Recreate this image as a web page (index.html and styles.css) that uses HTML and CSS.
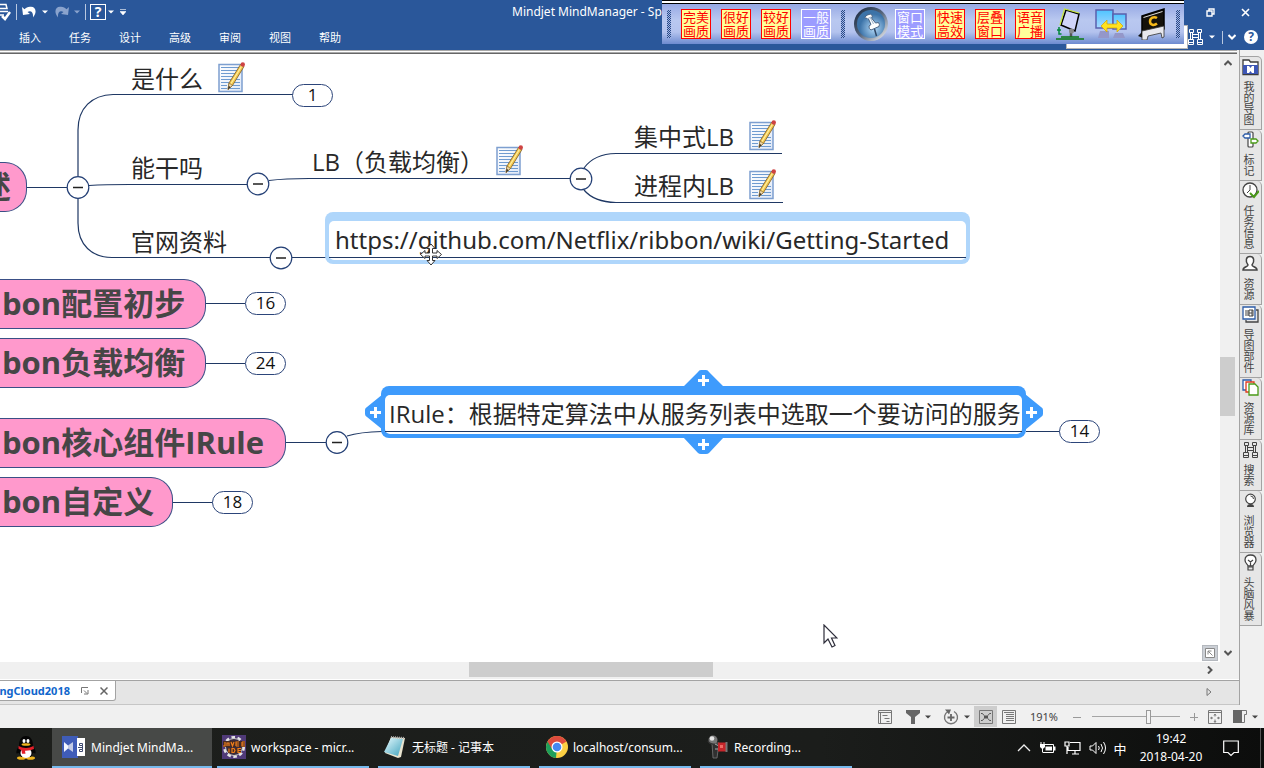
FILE: index.html
```html
<!DOCTYPE html>
<html lang="zh-CN">
<head>
<meta charset="utf-8">
<title>Mindjet MindManager</title>
<link rel="stylesheet" href="styles.css">
</head>
<body>
<svg class="defs" aria-hidden="true">
  <defs>
    <linearGradient id="paper" x1="0" y1="0" x2="1" y2="1"><stop offset="0" stop-color="#fff"/><stop offset="1" stop-color="#dfe8f7"/></linearGradient>
    <linearGradient id="pad" x1="0" y1="0" x2="1" y2="1"><stop offset="0" stop-color="#e8fbff"/><stop offset="1" stop-color="#3fa3bd"/></linearGradient>
    <linearGradient id="screen" x1="0" y1="0" x2="0" y2="1"><stop offset="0" stop-color="#4fc4ff"/><stop offset="1" stop-color="#a9d8ff"/></linearGradient>
    <linearGradient id="ring" x1="0" y1="0" x2="1" y2="1"><stop offset="0" stop-color="#15233a"/><stop offset=".5" stop-color="#55657c"/><stop offset="1" stop-color="#fff"/></linearGradient>
    <radialGradient id="ball" cx=".6" cy=".65"><stop offset="0" stop-color="#b5dcfb"/><stop offset="1" stop-color="#3c73a8"/></radialGradient>
    <symbol id="note" viewBox="0 0 28 32">
      <rect x="1" y="3.500" width="23" height="27" fill="url(#paper)" stroke="#7d9fd0" stroke-width="1.500"/>
      <path d="M3 6.500h18M3 9.500h17M3 12.500h15M3 15.500h13M3 18.500h11M3 21.500h8M3 24.500h6M3 27.500h6M17 18.500h5M16 21.500h6M14 24.500h8M12 27.500h10" stroke="#6f9bd0" stroke-width="1"/>
      <path d="M10 28.500l1-6.500L22.500 3.500l3.500 2L14.500 24.500z" fill="#f3c64c" stroke="#7b5a24" stroke-width=".8"/>
      <path d="M13 22.500L24 4.500" stroke="#fff0a0" stroke-width="1.200"/>
      <path d="M10 28.500l1-6.500 3.500 2.500z" fill="#f0d9a8" stroke="#7b5a24" stroke-width=".6"/>
      <path d="M10 28.500l.8-3.500 1.700 1z" fill="#222"/>
      <circle cx="24.800" cy="3.500" r="2.200" fill="#cf4343"/>
    </symbol>
    <symbol id="down" viewBox="0 0 6 4"><path d="M0 .5h6L3 3.500z" fill="currentColor"/></symbol>
    <symbol id="scopes" viewBox="0 0 17 16">
      <path d="M2.500.500h4v3h-4zM10.500.500h4v3h-4zM3.500 3.500v7M5.500 3.500v7M11.500 3.500v7M13.500 3.500v7M5.500 5.500h6M5.500 8.500h6M1.500 10.500h5v5h-5zM10.500 10.500h5v5h-5zM1.500 13.500h5M10.500 13.500h5" fill="none" stroke="currentColor" stroke-width="1"/>
    </symbol>
  </defs>
</svg>

<header class="ribbon">
  <div class="title-row">
    <div class="quick">
      <button type="button" aria-label="拼写检查"><svg width="11" height="18" viewBox="0 0 11 18"><path d="M0 1.500h6l1 4H0M0 8.500h8M0 12h4" fill="none" stroke="#fff" stroke-width="1.500"/><path d="M2 13l3 3 5-7" fill="none" stroke="#fff" stroke-width="2.500"/></svg></button>
      <i class="bar"></i>
      <button type="button" aria-label="撤销"><svg width="15" height="12" viewBox="0 0 15 12"><path d="M0 1l1 8 7-1-2.500-2c3-2 6-.5 5.500 5.500C16 5 13 0 8 .8 5.500 1 4 2 2.500 3.200z" fill="#fff"/></svg></button>
      <svg class="dd" width="6" height="4"><use href="#down"/></svg>
      <button type="button" class="redo" aria-label="重做"><svg width="15" height="12" viewBox="0 0 15 12"><path d="M15 1l-1 8-7-1 2.500-2c-3-2-6-.5-5.500 5.500C-1 5 2 0 7 .8c2.500.2 4 1.200 5.500 2.400z" fill="#8aa3cd"/></svg></button>
      <svg class="dd dim" width="6" height="4"><use href="#down"/></svg>
      <i class="bar"></i>
      <button type="button" class="ask">?</button>
      <svg class="dd" width="6" height="4"><use href="#down"/></svg>
      <button type="button" class="more" aria-label="自定义"><svg width="6" height="6" viewBox="0 0 6 6"><path d="M0 .5h6M0 2.500h6L3 6z" fill="#fff" stroke="#fff" stroke-width=".6"/></svg></button>
    </div>
    <h1 class="app-title">Mindjet MindManager - Sp</h1>
    <div class="window-buttons">
      <button type="button" aria-label="还原"><svg width="9" height="9" viewBox="0 0 9 9"><path d="M1 3h5v5H1zM3 3V1h5v5H6" fill="none" stroke="#fff" stroke-width="1.400"/></svg></button>
      <button type="button" aria-label="关闭"><svg width="9" height="9" viewBox="0 0 9 9"><path d="M1 1l7 7M8 1L1 8" stroke="#fff" stroke-width="1.600"/></svg></button>
    </div>
  </div>
  <div class="menu-row">
    <nav class="menus">
      <button type="button">插入</button><button type="button">任务</button><button type="button">设计</button><button type="button">高级</button><button type="button">审阅</button><button type="button">视图</button><button type="button">帮助</button>
    </nav>
    <div class="ribbon-tools">
      <button type="button" aria-label="查找"><svg width="17" height="16"><use href="#scopes"/></svg></button>
      <svg class="dd" width="6" height="4"><use href="#down"/></svg>
      <i class="bar short"></i>
      <button type="button" aria-label="折叠"><svg width="8" height="6" viewBox="0 0 8 6"><path d="M.5 1L4 4.500 7.500 1" fill="none" stroke="#fff" stroke-width="2"/></svg></button>
      <button type="button" class="help">?</button>
    </div>
  </div>

  <div class="caster-shadow"></div>
  <div class="caster">
    <i class="grip"></i>
    <button type="button" class="tile">完美<br>画质</button>
    <button type="button" class="tile">很好<br>画质</button>
    <button type="button" class="tile">较好<br>画质</button>
    <button type="button" class="tile off">一般<br>画质</button>
    <i class="grip"></i>
    <button type="button" class="pin" aria-label="固定"><svg width="38" height="36" viewBox="0 0 38 36"><circle cx="19" cy="18" r="17" fill="url(#ring)"/><circle cx="19" cy="18" r="14" fill="url(#ball)"/><path d="M12.500 11.500q2-3 6-3.500l2 2-1 2 4 5 3-.5q1.500 2 .5 4l-8 3.500q-2.500-1-2-4l2-1.500-2.500-5.500z" fill="#fff" stroke="#4a6484"/><path d="M15 13l4-2M18.500 12l3 6" stroke="#9ab0c8"/><path d="M22.500 23l2 7" stroke="#2f4664" stroke-width="1.500"/></svg></button>
    <button type="button" class="tile off">窗口<br>模式</button>
    <button type="button" class="tile">快速<br>高效</button>
    <button type="button" class="tile">层叠<br>窗口</button>
    <button type="button" class="tile">语音<br>广播</button>
    <button type="button" class="pic" aria-label="画板"><svg width="30" height="32" viewBox="0 0 30 32"><path d="M11 2l13 4-4 17-14-6z" fill="#d0d4f8" stroke="#000" stroke-width="1.500"/><path d="M5 17L9.500 1 24 5" fill="none" stroke="#c9e838" stroke-width="1.200"/><path d="M16 22v7" stroke="#555" stroke-width="2.500"/><circle cx="16.500" cy="23" r="2.500" fill="#888"/><path d="M2 22h4M4 19v7h2.500" fill="none" stroke="#00863a" stroke-width="1.500"/><path d="M1 31h28M6 29h18" stroke="#0c7a14" stroke-width="1.500"/></svg></button>
    <button type="button" class="pic" aria-label="共享"><svg width="33" height="32" viewBox="0 0 33 32"><path d="M5 23h9v7H3zM20 25h8l2 5H18z" fill="#9497c9"/><path d="M1 2h17v18H1z" fill="url(#screen)" stroke="#5960ad" stroke-width="1.500"/><path d="M18 6h13v15H18z" fill="url(#screen)" stroke="#5960ad" stroke-width="1.500"/><path d="M6 18l6-6v4h10v-4l6 6-6 6v-4H12v4z" fill="#ffe21e" stroke="#d3a300" stroke-width=".7"/></svg></button>
    <button type="button" class="pic" aria-label="屏幕"><svg width="28" height="32" viewBox="0 0 28 32"><path d="M0 28l5-5v7z" fill="#111"/><path d="M4 8l22-7v20L4 28z" fill="#15120c" stroke="#000" stroke-width="1.500"/><path d="M5.500 9.500L24.500 3.500" stroke="#ddd"/><path d="M4 23l22-5v11l-2 1-1-5-13 3-1 4H4z" fill="#e8e8ee" stroke="#333" stroke-width=".8"/><path d="M19 10c-3-2-7 0-7 3.500s4 4.500 7 2" fill="none" stroke="#f5b81a" stroke-width="2.500"/></svg></button>
    <i class="grip"></i>
  </div>
</header>

<main class="workspace">
  <section class="document">
    <div class="view">
      <div class="canvas">
        <svg class="links" width="1220" height="608" viewBox="0 54 1220 608">
          <g fill="none" stroke="#1f3864" stroke-width="1.200">
            <path d="M27 187.500H67M78 176V130C78 108 92 95 113 94.500H293M89 185.500Q105 184.500 129 184.500H247M78 198V223C78 245 92 257.500 112 257.500H270M269 180.500Q285 178.500 309 178.500H570M584 168Q594 154 616 153.500H782M584 190Q594 202 616 202.500H783M292 257.500H326"/>
            <path d="M205 303.500h40M205 363.500h40M286 442.500h40M172 502.500h41M347 436Q360 432 382 431.500M1026 431.500h34"/>
          </g>
          <g fill="#fff" stroke="#233f75" stroke-width="1.200">
            <circle cx="78" cy="187.500" r="10.800"/><circle cx="258" cy="184" r="10.800"/><circle cx="281" cy="258" r="10.800"/><circle cx="581" cy="179" r="10.800"/><circle cx="337" cy="442.500" r="10.800"/>
          </g>
          <path d="M73 187.500h10M253 184h10M276 258h10M576 179h10M332 442.500h10" stroke="#222" stroke-width="1.300"/>
          <path fill="#3e9bfc" d="M683 387l15-15q1-2 3-2h5q2 0 3 2l15 15zM683 437l15 16q1 1 3 1h5q2 0 3-1l15-16zM383 394l-16 13q-2 1-2 3v4q0 2 2 3l16 13zM1025 394l16 13q2 1 2 3v4q0 2-2 3l-16 13z"/>
          <path d="M703.500 439v11M698 444.500h11M375.500 407v11M370 412.500h11" stroke="#fff" stroke-width="3"/>
        </svg>

        <div class="topic t-overview">述</div>
        <div class="topic t-config">bon配置初步</div>
        <div class="topic t-balance">bon负载均衡</div>
        <div class="topic t-irule">bon核心组件IRule</div>
        <div class="topic t-custom">bon自定义</div>

        <span class="count c-what">1</span>
        <span class="count c-config">16</span>
        <span class="count c-balance">24</span>
        <span class="count c-custom">18</span>
        <span class="count c-irule">14</span>

        <div class="node n-what">是什么<svg width="28" height="32"><use href="#note"/></svg></div>
        <div class="node n-can">能干吗</div>
        <div class="node n-site">官网资料</div>
        <div class="node n-lb">LB（负载均衡）<svg width="28" height="32"><use href="#note"/></svg></div>
        <div class="node n-central">集中式LB<svg width="28" height="32"><use href="#note"/></svg></div>
        <div class="node n-inner">进程内LB<svg width="28" height="32"><use href="#note"/></svg></div>

        <div class="frame hovered"><div class="sheet"><a class="label" href="#ribbon">https://github.com/Netflix/ribbon/wiki/Getting-Started</a></div></div>
        <div class="frame selected"><div class="sheet"><span class="label">IRule：根据特定算法中从服务列表中选取一个要访问的服务</span></div></div>
        <svg class="plus plus-right" width="12" height="12" viewBox="0 0 12 12"><path d="M5.500 0v11M0 5.500h11" stroke="#fff" stroke-width="3"/></svg>
        <svg class="plus plus-top" width="12" height="12" viewBox="0 0 12 12"><path d="M5.500 0v11M0 5.500h11" stroke="#fff" stroke-width="3"/></svg>

        <svg class="move-cursor" width="22" height="23" viewBox="0 0 22 23"><path d="M11 1l4 4.500h-2.500v4.500H17V7.500l4.500 4L17 15.500V13h-4.500v4.500H15L11 22l-4-4.500h2.500V13H5v2.500L.5 11.500 5 7.500V10h4.500V5.500H7z" fill="#fff" stroke="#333"/></svg>
        <svg class="arrow-cursor" width="15" height="24" viewBox="0 0 15 24"><path d="M1 1v18l4-4 4 8 3-1.500L8.500 14H14z" fill="#fff" stroke="#2d2d3a" stroke-width="1.200"/></svg>
        <button type="button" class="fit-corner" aria-label="概览"><svg width="10" height="10" viewBox="0 0 10 10"><path d="M.5.500h9v9h-9z" fill="#fff" stroke="#888"/><path d="M3 6.500V3h3.500M3 3l4.500 4.500" fill="none" stroke="#888"/></svg></button>
      </div>
      <div class="vscroll">
        <svg width="8" height="6" viewBox="0 0 8 6"><path d="M.5 5L4 1.500 7.500 5" fill="none" stroke="#555" stroke-width="2"/></svg>
        <i class="vthumb"></i>
        <svg width="8" height="6" viewBox="0 0 8 6"><path d="M.5 1L4 4.500 7.500 1" fill="none" stroke="#555" stroke-width="2"/></svg>
      </div>
    </div>
    <div class="hscroll">
      <i class="hthumb"></i>
      <svg width="6" height="8" viewBox="0 0 6 8"><path d="M1 .5L4.500 4 1 7.500" fill="none" stroke="#555" stroke-width="2"/></svg>
    </div>
    <div class="doc-tabs">
      <div class="doc-tab">
        <span>ngCloud2018</span>
        <button type="button" aria-label="弹出"><svg width="8" height="8" viewBox="0 0 8 8"><path d="M.5 6V.5H7M3 3.500l3 3M7 3v4H3" fill="none" stroke="#777"/></svg></button>
        <button type="button" aria-label="关闭"><svg width="8" height="8" viewBox="0 0 8 8"><path d="M.5.500l7 7M7.500.5l-7 7" stroke="#666" stroke-width="1.500"/></svg></button>
      </div>
      <svg class="tab-next" width="6" height="8" viewBox="0 0 6 8"><path d="M1 .5L5 4 1 7.500z" fill="none" stroke="#777"/></svg>
    </div>
  </section>

  <aside class="side-tabs">
    <button type="button"><svg width="17" height="18" viewBox="0 0 17 18"><path d="M1 16.500V2h6l1.500 2H16v12.500z" fill="#fff" stroke="#3c3c3c" stroke-width="1.300"/><path d="M1 7h15v9H1z" fill="#3d56b5"/><path d="M5 8h2l1.500 2L10 8h2v7h-2l-1.500-2L7 15H5z" fill="#fff"/></svg><span>我的导图</span></button>
    <button type="button"><svg width="17" height="18" viewBox="0 0 17 18"><rect x="6" y="1" width="5" height="15" rx="1" fill="#fff" stroke="#444" stroke-width="1.200"/><path d="M1 5l2-2h5v4H3z" fill="#fff" stroke="#2d5ca8" stroke-width="1.300"/><path d="M16 10l-2-2H9v4h5z" fill="#fff" stroke="#4a9a18" stroke-width="1.300"/></svg><span>标记</span></button>
    <button type="button"><svg width="17" height="18" viewBox="0 0 17 18"><circle cx="8" cy="8" r="7" fill="#fff" stroke="#444" stroke-width="1.300"/><path d="M8 3v5l-3 3" fill="none" stroke="#444"/><path d="M8 11l4 4 5-6" fill="none" stroke="#4a9a18" stroke-width="2"/></svg><span>任务信息</span></button>
    <button type="button"><svg width="17" height="18" viewBox="0 0 17 18"><path d="M6 10C3 6 4 1.500 8 1.500S13 6 10 10c0 2 5 1.500 5 5H1c0-3.500 5-3 5-5z" fill="#fff" stroke="#444" stroke-width="1.500"/></svg><span>资源</span></button>
    <button type="button"><svg width="17" height="18" viewBox="0 0 17 18"><path d="M14 4h2v12H4v-2" fill="none" stroke="#444" stroke-width="1.300"/><path d="M1 1h12v12H1z" fill="#fff" stroke="#2d5ca8" stroke-width="1.300"/><path d="M7 4h3v6H7zM3 5h4M3 7h7M3 9h4M10 4h1v6h-1" fill="none" stroke="#444"/></svg><span>导图部件</span></button>
    <button type="button"><svg width="17" height="18" viewBox="0 0 17 18"><path d="M1 1h8v10H1z" fill="#fff" stroke="#2d5ca8" stroke-width="1.300"/><path d="M4 3h8v10H4z" fill="#fff" stroke="#e03a1e" stroke-width="1.300"/><path d="M7 5h6l3 3v8H7z" fill="#fff" stroke="#4a9a18" stroke-width="1.300"/></svg><span>资源库</span></button>
    <button type="button"><svg width="17" height="18"><use href="#scopes"/></svg><span>搜索</span></button>
    <button type="button"><svg width="17" height="18" viewBox="0 0 17 18"><circle cx="8.500" cy="7" r="4.800" fill="#fff" stroke="#444" stroke-width="1.200"/><path d="M8.500 4q3 0 3 3" fill="none" stroke="#444"/><path d="M5 15q0-3 3.500-3t3.500 3z" fill="#444"/></svg><span>浏览器</span></button>
    <button type="button"><svg width="17" height="18" viewBox="0 0 17 18"><path d="M6 12c0-2-3-2-3-6s3-5 5.500-5S14 2 14 6s-3 4-3 6z" fill="#fff" stroke="#444" stroke-width="1.300"/><path d="M6 6l2.500 2L11 6M8.500 8v4M6 13h5v3H6z" fill="none" stroke="#444" stroke-width="1.200"/></svg><span>头脑风暴</span></button>
  </aside>
</main>

<footer class="status">
  <button type="button" class="w26" aria-label="大纲"><svg width="14" height="14" viewBox="0 0 14 14"><path d="M.5.500h13v13H.5zM.5 2.500h13M2.500 2.500v11M4.500 5.500h5M6.500 8.500h5M8.500 11.500h3" fill="none" stroke="#777"/></svg></button>
  <button type="button" class="w40" aria-label="筛选"><svg width="14" height="14" viewBox="0 0 14 14"><path d="M0 0h14v3L9 7v7H5V7L0 3z" fill="#666"/></svg><svg class="dd" width="6" height="4"><use href="#down"/></svg></button>
  <button type="button" class="w36" aria-label="详细级别"><svg width="16" height="16" viewBox="0 0 16 16"><path d="M5 2.500a6.500 6.500 0 1 0 6 0" fill="none" stroke="#777" stroke-width="1.400"/><path d="M2 .5h6l-2 5z" fill="#666"/><path d="M8 5v7M4.500 8.500h7" stroke="#666" stroke-width="1.800"/></svg><svg class="dd" width="6" height="4"><use href="#down"/></svg></button>
  <button type="button" class="w23 on" aria-label="导图视图"><svg width="14" height="14" viewBox="0 0 14 14"><path d="M.5.500h13v13H.5z" fill="none" stroke="#777"/><path d="M5 5.500h4v3H5z" fill="#555"/><path d="M2 3.500h1.500L5 5.500M12 3.500h-1.500L9 5.500M2 10.500h1.500L5 8.500M12 10.500h-1.500L9 8.500" fill="none" stroke="#555"/></svg></button>
  <button type="button" class="w24" aria-label="大纲视图"><svg width="14" height="14" viewBox="0 0 14 14"><path d="M.5.500h13v13H.5zM2 2.500h10M4 4.500h8M4 6.500h8M4 8.500h8M4 10.500h8" fill="none" stroke="#777"/></svg></button>
  <output class="w46" for="zoom">191%</output>
  <button type="button" class="w20" aria-label="缩小"><svg width="8" height="8" viewBox="0 0 8 8"><path d="M0 4.500h8" stroke="#999"/></svg></button>
  <input id="zoom" type="range" min="0" max="100" value="65" aria-label="缩放">
  <button type="button" class="w18" aria-label="放大"><svg width="8" height="8" viewBox="0 0 8 8"><path d="M0 4.500h8M4.500 0v8" stroke="#999"/></svg></button>
  <button type="button" class="w23" aria-label="适合"><svg width="14" height="14" viewBox="0 0 14 14"><path d="M.5.500h13v13H.5zM.5 2.500h13M7 4.500v2M7 9.500v2M3 8h2M9 8h2M6 5.500l1-1.500 1 1.500M6 11l1 1.500L8 11M4 7L2.500 8 4 9M10 7l1.500 1L10 9" fill="none" stroke="#777"/></svg></button>
  <button type="button" class="w38" aria-label="任务窗格"><svg width="14" height="13" viewBox="0 0 14 13"><path d="M0 0h9v13H0z" fill="#666"/><path d="M9 .5h4.500v4h-2v8H9" fill="none" stroke="#777"/></svg><svg class="dd" width="6" height="4"><use href="#down"/></svg></button>
</footer>

<nav class="taskbar">
  <button type="button" class="qq" aria-label="QQ"><svg width="20" height="24" viewBox="0 0 20 24"><ellipse cx="5.500" cy="22" rx="4.500" ry="1.800" fill="#f0b51e"/><ellipse cx="14.500" cy="22" rx="4.500" ry="1.800" fill="#f0b51e"/><path d="M3 10C3 3 6 0 10 0s7 3 7 10c2 3 3 5 2.500 7.500L17 17l-2 4H5l-2-4-2.500.5C0 15 1 13 3 10z" fill="#050505"/><ellipse cx="10" cy="17" rx="5.500" ry="5" fill="#fff"/><ellipse cx="8" cy="5" rx="1.500" ry="2" fill="#fff"/><ellipse cx="12" cy="5" rx="1.500" ry="2" fill="#fff"/><ellipse cx="10" cy="8.500" rx="4.500" ry="1.300" fill="#f0b51e"/><path d="M2.500 10q7.500 4 15 0l.5 3q-4 2-9 1.800l.5 3H6l-.5-3.500-3-1.500z" fill="#e3202a"/></svg></button>
  <button type="button" class="task active"><svg width="24" height="24" viewBox="0 0 24 24"><path d="M0 1h16v22H0z" fill="#3f5cb8"/><path d="M15 3h8v18h-8z" fill="#fff"/><path d="M2 7l4 3.500V13.500L2 17z" fill="#f4f6ff"/><path d="M11 7l-5 3.500v3l5 3.500z" fill="#c3cbe6"/><path d="M17.500 8.500h3v2h-3zM17.500 14.500h3v2h-3zM16 12.500h4.500M20.500 10.500v4" fill="none" stroke="#3f4a70"/></svg><span>Mindjet MindMa...</span></button>
  <button type="button" class="task"><svg width="24" height="24" viewBox="0 0 24 24"><path d="M0 0h24v24H0z" fill="#503a78"/><circle cx="12" cy="12" r="9.500" fill="none" stroke="#e5e5e5" stroke-width="3" stroke-dasharray="3.500 2.500"/><circle cx="12" cy="12" r="8.500" fill="#392b3d" stroke="#ccc"/><path d="M1 6h22v6H1zM6 13h13v5H6z" fill="#442a24"/><path d="M1 11h2V7M5 11V8h2v3M9 7l1.500 4L12 7M14 11V7h3M14 9h3M14 11h3M20 7h3M20 7v4h3M20 9h3M7 13.500v4M10 13.500v4h2l1-2-1-2zM19 13.500h-3v4h3M16 15.500h3" fill="none" stroke="#f07e1c" stroke-width="1.200"/></svg><span>workspace - micr...</span></button>
  <button type="button" class="task"><svg width="24" height="24" viewBox="0 0 24 24"><path d="M8 2l14 1-4 19-3 1L2 18z" fill="#e9e4cf"/><path d="M8 3l12 1-5 17-14-4z" fill="url(#pad)"/><path d="M8 2l14 1" stroke="#aaa" stroke-width="2" stroke-dasharray="1 1"/></svg><span>无标题 - 记事本</span></button>
  <button type="button" class="task"><svg width="24" height="24" viewBox="0 0 24 24"><circle cx="13" cy="12" r="11" fill="#fbd043"/><path d="M13 12L3.500 6.500A11 11 0 0 1 22.500 6.500z" fill="#dd4b3e"/><path d="M13 12L3.500 6.500A11 11 0 0 0 12 23z" fill="#1d9f5b"/><path d="M3.500 6.500L8 14l5-7h10" fill="#dd4b3e"/><circle cx="13" cy="12" r="5.500" fill="#fff"/><circle cx="13" cy="12" r="4.300" fill="#4688f1"/></svg><span>localhost/consum...</span></button>
  <button type="button" class="task"><svg width="24" height="24" viewBox="0 0 24 24"><path d="M7 8h7l-2 15H8z" fill="#303030" stroke="#777" stroke-width=".8"/><circle cx="8" cy="5" r="4.500" fill="#777"/><circle cx="7" cy="3.500" r="2.300" fill="#e4e4e4"/><path d="M3 6q2 4 8 3" fill="none" stroke="#333" stroke-width="1.500"/><path d="M10 9l4 2M10 14h4" stroke="#aaa"/><path d="M13 7.500h8v9h-8z" fill="#c5262b"/><path d="M15 10h3v3h-3z" fill="#ef6a64"/><path d="M20.500 7h2v10h-2z" fill="#777"/></svg><span>Recording...</span></button>
  <div class="tray">
    <button type="button" aria-label="显示隐藏的图标"><svg width="14" height="8" viewBox="0 0 14 8"><path d="M1 7l6-6 6 6" fill="none" stroke="#eee" stroke-width="1.300"/></svg></button>
    <button type="button" aria-label="电源"><svg width="17" height="14" viewBox="0 0 17 14"><path d="M6 3.500h8.500v8H4" fill="none" stroke="#fff"/><path d="M6.500 5.500H13v4H6.500z" fill="#fff"/><path d="M15 5.500h1.500v4H15zM1 3h5v3L4.500 7.500h-2L1 6z" fill="#fff"/><path d="M2 1v2M5 1v2M3.500 7v4.500" stroke="#fff"/></svg></button>
    <button type="button" aria-label="网络"><svg width="17" height="14" viewBox="0 0 17 14"><path d="M6 1.500h10v8H4V6M1 1h4v4H1zM3 5v8M8 13h7M11 10v3" fill="none" stroke="#fff" stroke-width="1.200"/></svg></button>
    <button type="button" aria-label="音量"><svg width="17" height="14" viewBox="0 0 17 14"><path d="M1 5h2.500L7 1.500v11L3.500 9H1zM9.500 5q1.500 2 0 4M12 3q3 4 0 8M14.500 1q4 6 0 12" fill="none" stroke="#fff"/></svg></button>
    <button type="button" class="ime">中</button>
    <time class="clock">19:42<br>2018-04-20</time>
    <button type="button" class="notice" aria-label="通知"><svg width="16" height="17" viewBox="0 0 16 17"><path d="M.700 1h14.600v11.500H11L8 15.500l-3-3H.700z" fill="none" stroke="#fff" stroke-width="1.200"/></svg></button>
    <i class="desktop"></i>
  </div>
</nav>
</body>
</html>
```
FILE: styles.css
```css
* { box-sizing: border-box; }
body {
  margin: 0;
  height: 100vh;
  display: flex;
  flex-direction: column;
  overflow: hidden;
  font-family: "Noto Sans", "Noto Sans CJK SC", sans-serif;
  font-size: 12px;
  background: #f0f0f0;
  color: #282828;
}
button {
  margin: 0;
  padding: 0;
  border: 0;
  background: none;
  font: inherit;
  color: inherit;
  display: flex;
  align-items: center;
  justify-content: center;
}
svg { display: block; flex: none; }
.defs { position: absolute; width: 0; height: 0; }

/* ribbon */
.ribbon { position: relative; flex: none; background: #2a579a; color: #fff; }
.title-row { display: flex; height: 24px; align-items: center; }
.quick { display: flex; align-items: center; gap: 5px; width: 512px; }
.bar { width: 1px; height: 16px; background: #b9c8e0; }
.bar.short { height: 13px; }
.dim { color: #8aa3cd; }
.quick .redo { margin-left: 1px; }
.ask { width: 16px; height: 16px; border: 1px solid #fff; font-size: 14px; font-weight: 700; line-height: 14px; }
.quick .ask { margin-left: -1px; margin-right: -3px; }
.quick .more { margin-left: 1px; }
.app-title { margin: 0; font-size: 12px; font-weight: 400; line-height: 20px; white-space: nowrap; }
.window-buttons { display: flex; margin-left: auto; gap: 26px; padding-right: 14px; }
.menu-row { display: flex; height: 26px; align-items: center; }
.menus { display: flex; padding-left: 5px; }
.menus button { width: 50px; height: 26px; font-size: 11px; }
.ribbon-tools { display: flex; align-items: center; gap: 5px; margin-left: auto; padding-right: 6px; }
.ribbon-tools .dd { margin-right: 2px; }
.help { width: 14px; height: 14px; border-radius: 50%; background: #fff; color: #2a579a; font-weight: 700; font-size: 12px; line-height: 14px; }
.ribbon-tools button + .help { margin-left: 3px; }

/* broadcast toolbar floating over the ribbon */
.caster-shadow { position: absolute; right: 76px; top: 25px; width: 122px; height: 24px; background: #fff; border: 1px solid #b5b5b5; }
.caster {
  position: absolute;
  right: 80px;
  top: 0;
  width: 522px;
  height: 44px;
  padding: 4px 0 0 5px;
  display: flex;
  align-items: center;
  gap: 10px;
  background: linear-gradient(#000 0 1px, #fff 1px 3px, #000 3px 4px, #97a9e4 4px, #b9c8f0 20px, #b4c3ee 32px, #6d8bd0 44px);
}
.grip { flex: none; width: 4px; height: 28px; background: repeating-conic-gradient(#294a87 0 25%, #a4b6e6 0 50%) 0 0 / 2px 2px; }
.tile { flex: none; width: 30px; height: 30px; border: 1px solid #f00; background: #ffff9a; color: #f00; font-family: "Noto Sans CJK SC", sans-serif; font-size: 13px; line-height: 14px; }
.tile.off { border-color: #fff; background: #9c9cff; color: #fff; }
.pin { margin: 0 -5px 0 -3px; }

/* document area */
.workspace { flex: 1; min-height: 0; display: flex; background: #f0f0f0; }
.document { flex: 1; min-width: 0; display: flex; flex-direction: column; border-right: 1px solid #a3a3a3; }
.view { flex: 1; min-height: 0; display: flex; margin-right: 2px; padding-top: 4px; background: linear-gradient(#a8a8a8 0 1px, #fff 1px 2px, #aaa 2px 3px, #666 3px 4px, #fff 4px); }
.canvas { position: relative; flex: 1; overflow: hidden; background: #fff; font-family: "Open Sans", "Noto Sans CJK SC", sans-serif; }
.vscroll { width: 17px; padding: 6px 2px 6px 0; display: flex; flex-direction: column; align-items: center; justify-content: space-between; background: #f0f0f0; }
.vthumb { width: 15px; height: 59px; margin-top: 56px; background: #cdcdcd; }
.hscroll { flex: none; height: 17px; margin-right: 2px; padding-right: 24px; display: flex; justify-content: space-between; background: #f0f0f0; }
.hscroll svg { margin-top: 4px; }
.hthumb { width: 244px; height: 15px; margin-left: 469px; background: #cdcdcd; }
.doc-tabs { flex: none; height: 26px; padding-right: 27px; display: flex; align-items: flex-start; justify-content: space-between; background: #e5e5e5; border-top: 1px solid #fff; border-bottom: 1px solid #c6c6c6; box-shadow: inset 0 1px #a3a3a3; }
.doc-tab { display: flex; align-items: center; justify-content: flex-end; gap: 11px; width: 116px; height: 21px; padding-right: 7px; overflow: hidden; background: #fff; border: 1px solid #a3a3a3; border-width: 1px 1px 1px 0; border-radius: 0 0 3px 0; color: #0f66cc; font-size: 11px; font-weight: 700; }
.tab-next { margin-top: 8px; }

/* mind map */
.links { position: absolute; left: 0; top: 0; }
.topic { position: absolute; left: 0; height: 50px; padding-left: 2px; border: 1px solid #3a4f86; border-left: 0; border-radius: 0 22px 22px 0; background: #ff99cc; color: #464646; font-size: 31px; font-weight: 700; line-height: 47px; white-space: nowrap; overflow: hidden; }
.t-overview { top: 108px; width: 27px; text-indent: -22px; }
.t-config { top: 225px; width: 206px; }
.t-balance { top: 284px; width: 206px; }
.t-irule { top: 364px; width: 286px; }
.t-custom { top: 423px; width: 173px; }
.count { position: absolute; width: 41px; height: 23px; border: 1px solid #2c457a; border-radius: 12px; background: #fff; color: #111; font-size: 17px; line-height: 20px; text-align: center; }
.c-what { left: 292px; top: 30px; }
.c-config { left: 245px; top: 238px; }
.c-balance { left: 245px; top: 298px; }
.c-custom { left: 212px; top: 437px; }
.c-irule { left: 1059px; top: 366px; }
.node { position: absolute; display: flex; align-items: center; gap: 15px; height: 32px; font-size: 24px; line-height: 32px; white-space: nowrap; }
.node svg { margin-bottom: 4px; }
.n-what { left: 131px; top: 9px; }
.n-can { left: 131px; top: 98px; }
.n-site { left: 131px; top: 172px; }
.n-lb { left: 312px; top: 92px; gap: 12px; }
.n-central { left: 634px; top: 67px; }
.n-inner { left: 634px; top: 116px; }
.frame { position: absolute; height: 52px; padding: 9px 4px 4px; border-radius: 8px; font-size: 24px; white-space: nowrap; }
.sheet { height: 39px; border-radius: 5px; background: #fff; }
.label { display: block; height: 37px; padding-left: 6px; border-bottom: 1px solid #1f3864; line-height: 38px; color: #282828; text-decoration: none; }
.hovered { left: 325px; top: 158px; width: 645px; background: #afd6fb; font-family: "Noto Sans", sans-serif; }
.selected { left: 381px; top: 332px; width: 645px; background: #3e9bfc; }
.selected .label { padding-left: 4px; }
.plus { position: absolute; }
.plus-right { left: 1026px; top: 353px; }
.plus-top { left: 698px; top: 321px; }
.move-cursor { position: absolute; left: 420px; top: 189px; }
.arrow-cursor { position: absolute; left: 823px; top: 570px; }
.fit-corner { position: absolute; right: 2px; bottom: 1px; width: 16px; height: 16px; background: #ccd0d6; border: 1px solid #b4b8be; }

/* side tabs */
.side-tabs { flex: none; width: 24px; padding: 6px 2px 0 0; display: flex; flex-direction: column; }
.side-tabs button { flex-direction: column; justify-content: flex-start; gap: 5px; padding: 1px 1px 4px 0; border: 1px solid #a3a3a3; border-width: 0 1px 1px 0; border-top-right-radius: 5px; background: #e6e6e6; color: #444; }
.side-tabs button:first-child { border-top-width: 1px; }
.side-tabs span { margin-right: 4px; writing-mode: vertical-rl; font-size: 11px; line-height: 14px; text-orientation: upright; }

/* status bar */
.status { flex: none; height: 23px; display: flex; justify-content: flex-end; align-items: center; background: #f0f0f0; color: #444; }
.status button { height: 21px; gap: 5px; }
.status output { font-size: 11px; text-align: center; }
.status .on { background: #cdcdcd; }
.w18 { width: 18px; }
.w20 { width: 20px; }
.w23 { width: 23px; }
.w24 { width: 24px; }
.w26 { width: 26px; }
.w36 { width: 36px; }
.w38 { width: 38px; }
.w40 { width: 40px; }
.w46 { width: 46px; }
.status input { appearance: none; width: 88px; height: 14px; margin: 0 5px; background: linear-gradient(#a5a5a5, #a5a5a5) center / 100% 1px no-repeat; }
.status input::-webkit-slider-thumb { appearance: none; width: 5px; height: 14px; border: 1px solid #999; background: #f4f4f4; }

/* taskbar */
.taskbar { flex: none; height: 40px; display: flex; background: linear-gradient(90deg, #1d1f1c, #1b1d1b 65%, #0c0d0c); color: #fff; }
.qq { width: 52px; }
.task { width: 152px; margin-right: 9px; padding: 0 6px 0 5px; gap: 5px; justify-content: flex-start; border-bottom: 2px solid #76b9ed; white-space: nowrap; overflow: hidden; }
.task.active { width: 160px; margin-right: 5px; padding-left: 10px; background: #474947; }
.tray { display: flex; align-items: center; margin-left: auto; gap: 8px; }
.ime { width: 12px; font-size: 13px; }
.clock { width: 74px; text-align: center; line-height: 18px; }
.notice { margin-left: 7px; }
.desktop { width: 4px; height: 40px; margin-left: 13px; border-left: 1px solid #555; }
```
